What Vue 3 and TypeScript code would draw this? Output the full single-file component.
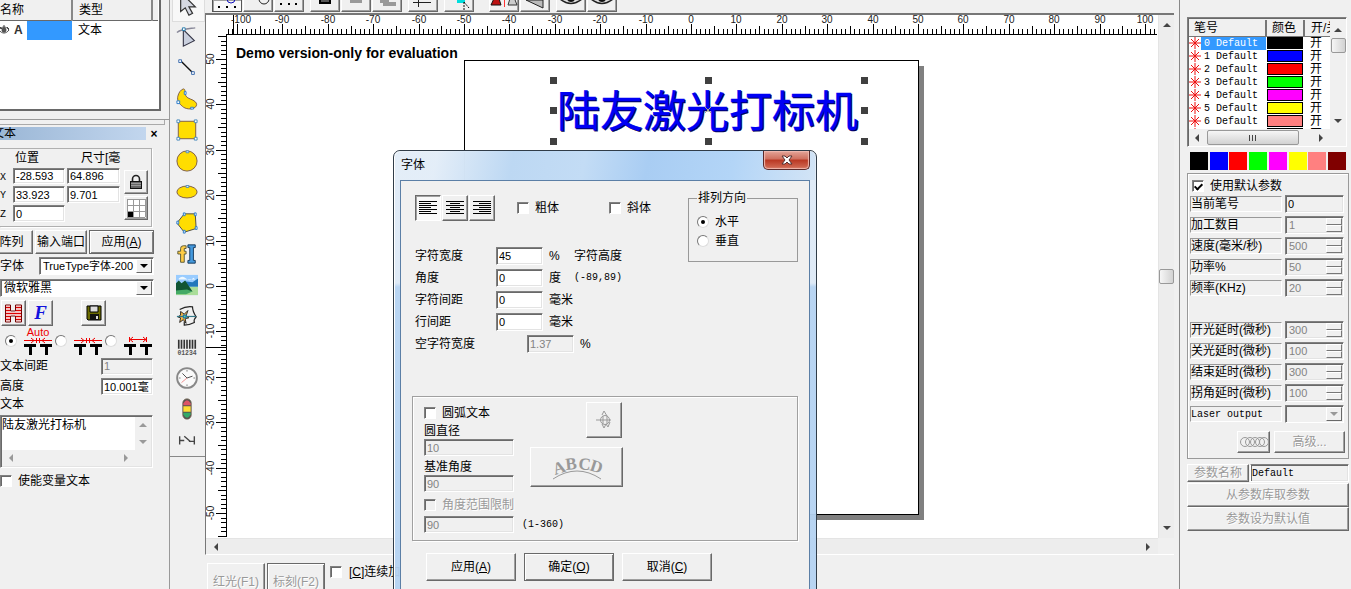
<script setup lang="ts">
import { ref } from 'vue'

interface Tick { pos: number; len: number; label: string }

const UNIT_START = -102
const UNIT_END = 102

function ticks(zero: number, from: number, to: number, dir: 1 | -1): Tick[] {
  const out: Tick[] = []
  for (let n = from; n <= to; n++) {
    out.push({
      pos: Math.round(zero + dir * n * 4.54),
      len: n % 10 === 0 ? 10 : n % 5 === 0 ? 8 : 5,
      label: n % 10 === 0 ? String(n) : '',
    })
  }
  return out
}

const hTicks = ticks(485, UNIT_START, UNIT_END, 1)
const vTicks = ticks(271, -55, 55, -1)

const handles = [80, 110, 141].flatMap((y) =>
  [554, 709, 865].filter((x) => !(x === 709 && y === 110)).map((x) => ({ x: x - 206, y: y - 15 })),
)

const pens = [
  { id: 0, color: '#000000' },
  { id: 1, color: '#0000ff' },
  { id: 2, color: '#ff0000' },
  { id: 3, color: '#00ff00' },
  { id: 4, color: '#ff00ff' },
  { id: 5, color: '#ffff00' },
  { id: 6, color: '#ff8080' },
  { id: 7, color: '#800000' },
]
const selectedPen = ref(0)

const params = [
  { id: 'count', label: '加工数目', value: '1' },
  { id: 'speed', label: '速度(毫米/秒)', value: '500' },
  { id: 'power', label: '功率%', value: '50' },
  { id: 'freq', label: '频率(KHz)', value: '20' },
]
const delays = [
  { id: 'on', label: '开光延时(微秒)', value: '300' },
  { id: 'off', label: '关光延时(微秒)', value: '100' },
  { id: 'end', label: '结束延时(微秒)', value: '300' },
  { id: 'corner', label: '拐角延时(微秒)', value: '100' },
]

const useDefault = ref(true)
const bold = ref(false)
const italic = ref(false)
const arc = ref(false)
const variable = ref(false)
const continuous = ref(false)
const direction = ref('h')
const spacing = ref('auto')
const align = ref('left')
const content = ref('陆友激光打标机')
</script>

<template>
  <div class="app">
    <aside class="left">
      <div class="objects">
        <table>
          <thead><tr><th class="c1">名称</th><th class="c2">类型</th><th></th></tr></thead>
          <tbody>
            <tr>
              <td class="c1">
                <div class="objname">
                  <svg width="11" height="10" viewBox="0 0 11 10" fill="none" stroke="#444"><path d="M-1 5C2 1 6 1 9 5C6 9 2 9 -1 5M0 2l2 2M4 0v3M7 2l2 2" /><circle cx="4" cy="5" r="2" fill="#555" /></svg>
                  <b>A</b><span class="sel"></span>
                </div>
              </td>
              <td class="c2">文本</td><td></td>
            </tr>
          </tbody>
        </table>
      </div>
      <div class="dock"><div></div></div>
      <div class="caption"><div class="capbar"><span>文本</span></div><button aria-label="关闭面板">×</button></div>

      <div class="posgroup">
        <div class="posgrid">
          <span></span><span class="hd">位置</span><span class="hd size">尺寸[毫</span>
          <label for="px">X</label><input id="px" class="sunk" value="-28.593"><input class="sunk" aria-label="宽度" value="64.896">
          <label for="py">Y</label><input id="py" class="sunk" value="33.923"><input class="sunk" aria-label="高" value="9.701">
          <label for="pz">Z</label><input id="pz" class="sunk" value="0">
        </div>
        <div class="posbtns">
          <button class="btn" aria-label="锁定"><svg width="14" height="16" viewBox="0 0 14 16"><path d="M3.500 8V5a3.500 3.500 0 0 1 7 0v3" fill="none" stroke="#222" stroke-width="1.600" /><rect x="1.500" y="7.500" width="11" height="7" fill="#666" stroke="#111" /><path d="M2 9.500h10M2 11.500h10" stroke="#999" /></svg></button>
          <button class="btn" aria-label="基准点"><svg width="20" height="20" viewBox="0 0 20 20"><rect x="1" y="1" width="18" height="18" fill="#fff" /><path d="M1.500 1v18M7.500 1v18M13.500 1v18M19.500 1v18M1 1.500h18M1 7.500h18M1 13.500h18M1 19.500h18" stroke="#999" /><rect x="2" y="14" width="5" height="5" /></svg></button>
        </div>
      </div>

      <div class="btnrow"><button class="btn b1">阵列</button><button class="btn b2">输入端口</button><button class="btn def b3">应用(<u>A</u>)</button></div>
      <div class="line fontrow">
        <label for="ftype">字体</label>
        <span class="combo"><select id="ftype"><option>TrueType字体-200</option></select><i></i></span>
      </div>
      <span class="combo wide"><select aria-label="字体名称"><option>微软雅黑</option></select><i></i></span>
      <div class="iconrow">
        <button class="btn" aria-label="填充"><svg width="17" height="19" viewBox="0 0 17 19"><path d="M.5 1h5v6h5V1h6v17h-6v-6h-5v6h-5z" fill="#fff" stroke="#700" /><path d="M1 3.500h4M1 6.500h4M1 9.500h15M1 12.500h4M1 15.500h4M11 3.500h5M11 6.500h5M11 12.500h5M11 15.500h5" stroke="#d00" stroke-width="1.700" /></svg></button>
        <button class="btn ff" aria-label="字体属性">F</button>
        <button class="btn save" aria-label="保存"><svg width="16" height="16" viewBox="0 0 16 16"><path d="M1 1h14v14H2L1 14z" fill="#6b6b00" stroke="#000" /><path d="M4 1h8v6H4z" fill="#ddd" stroke="#000" /><path d="M4 9h9v6H4z" fill="#111" /><path d="M10 11h2v3h-2z" fill="#ddd" /></svg></button>
      </div>
      <div class="spacerow">
        <input v-model="spacing" type="radio" name="spacing" value="auto" aria-label="自动间距">
        <svg width="30" height="30" viewBox="0 0 30 30"><text x="15" y="10" text-anchor="middle" class="auto">Auto</text><path d="M1 14.500h28M8 12l3 2.500L8 17M22 12l-3 2.500L22 17M13.500 12v5M16.500 12v5" stroke="#e00" fill="none" /><path d="M1 18h12v3H9v8H6v-8H1zM17 18h12v3h-4v8h-3v-8h-5z" /></svg>
        <input v-model="spacing" type="radio" name="spacing" value="mid" aria-label="中心间距">
        <svg width="30" height="30" viewBox="0 0 30 30"><path d="M1 14.500h28M8 12l3 2.500L8 17M22 12l-3 2.500L22 17M13.500 12v5M16.500 12v5" stroke="#e00" fill="none" /><path d="M1 18h12v3H9v8H6v-8H1zM17 18h12v3h-4v8h-3v-8h-5z" /></svg>
        <input v-model="spacing" type="radio" name="spacing" value="edge" aria-label="边缘间距">
        <svg width="30" height="30" viewBox="0 0 30 30"><path d="M7 13.500h17M6.500 11v5M23.500 11v5M10 11l-3 2.500 3 2.500M20 11l3 2.500-3 2.500" stroke="#e00" fill="none" /><path d="M1 18h12v3H9v8H6v-8H1zM17 18h12v3h-4v8h-3v-8h-5z" /></svg>
      </div>
      <div class="line kv"><label for="tgap">文本间距</label><input id="tgap" class="sunk" value="1" disabled></div>
      <div class="line kv"><label for="thei">高度</label><input id="thei" class="sunk" value="10.001毫"></div>
      <label class="line" for="tbody">文本</label>
      <div class="area sunk">
        <textarea id="tbody" v-model="content"></textarea>
        <div class="vbar"><i class="ar up"></i><i class="ar down"></i></div>
        <div class="hbar"><i class="ar lf"></i><i class="ar rt"></i></div>
      </div>
      <label class="check varcheck"><input v-model="variable" type="checkbox">使能变量文本</label>
    </aside>

    <nav class="tools" aria-label="绘图工具">
      <button class="on" aria-label="选择"><svg viewBox="0 0 24 24"><path d="M4 0v18l5-4 4 8 4-2-4-7h7L6-1z" fill="#d5d8e2" stroke="#333" stroke-width="1.300" /></svg></button>
      <button aria-label="节点"><svg viewBox="0 0 24 24"><path d="M1 7c5-4 12-4 20-5" fill="none" stroke="#889" stroke-width="1.500" /><path d="M8 4v18l12-6z" fill="#c9cfdd" stroke="#334" stroke-width="1.200" /><path d="M7 2h3v3H7z" fill="#fff" stroke="#27a" /></svg></button>
      <button aria-label="直线"><svg viewBox="0 0 24 24"><path d="M5 4l13 13" stroke="#111" stroke-width="1.500" /><path d="M3 3h3v3H3zM17 16h3v3h-3z" fill="#fff" stroke="#36a" /></svg></button>
      <button aria-label="曲线"><svg viewBox="0 0 24 24"><path d="M8 1c3 0 1 5 3 8 2 3 7 3 10 6 2 2 2 4 0 6-4 3-11 2-14-1C3 17 1 13 2 9c1-4 3-7 6-8z" fill="#fd0" stroke="#754" /><path d="M9 4h2v3H9zM1 14h3v3H1zM16 21h3v2h-3z" fill="#fff" stroke="#27c" /></svg></button>
      <button aria-label="矩形"><svg viewBox="0 0 24 24"><path d="M2.500 2.500h19v19h-19z" fill="#fd0" stroke="#754" /><path d="M1 1h3v3H1zM20 1h3v3h-3zM1 20h3v3H1zM20 20h3v3h-3z" fill="#fff" stroke="#48b" /></svg></button>
      <button aria-label="圆"><svg viewBox="0 0 24 24"><circle cx="12" cy="12" r="11" fill="#fd0" stroke="#754" /><path d="M11 1h3v2h-3z" fill="#fff" stroke="#48b" /></svg></button>
      <button aria-label="椭圆"><svg viewBox="0 0 24 24"><ellipse cx="12" cy="12" rx="11" ry="6.500" fill="#fd0" stroke="#754" /><path d="M11 5h3v2h-3z" fill="#fff" stroke="#48b" /></svg></button>
      <button aria-label="多边形"><svg viewBox="0 0 24 24"><path d="M9 2h12l1 16-13 4-8-10z" fill="#fd0" stroke="#444" /><path d="M8 1h2v3H8zM20 1h2v3h-2zM21 16h2v3h-2zM8 20h2v3H8zM1 10h2v3H1z" fill="#fff" stroke="#27c" /></svg></button>
      <button aria-label="文字"><svg viewBox="0 0 24 24"><path d="M10 3H8Q5 3 5 6v3H2v3h3v9h4v-9h2V9H9V6h2V3z" fill="#fc4" stroke="#553" /><path d="M13 2h8v3h-2v14h2v3h-8v-3h2V5h-2z" fill="#49d" stroke="#135" /></svg></button>
      <button aria-label="位图"><svg viewBox="0 0 24 24"><path d="M0 1h24v22H0z" fill="#9cf" /><path d="M9 8l9 1 6-4v9H9z" fill="#27b" /><path d="M3 5q4-4 8 0t8-1l2 2H3z" fill="#eef8ff" /><path d="M0 14h24v9H0z" fill="#ad9" /><path d="M0 10l3-3 3 3 4-3 4 6 4 6H0z" fill="#153" /><path d="M0 18l12-1 6 2-7 3H0z" fill="#4a6" /></svg></button>
      <button aria-label="矢量文件"><svg viewBox="0 0 24 24" fill="none" stroke="#222" stroke-width="1.300"><path d="M4 5q7-4 14-3 0 5 4 11-3 3-2 6-6 3-11 3v-4" /><path d="M5 7l4 3 4-4-2 6 3 2-4 1 1 5-3-4-4 3 1-5-3-1 3-2z" fill="#fb4" stroke-width="1" /><path d="M1 12.500h21" stroke="#378" /><path d="M8 11h3v3H8z" fill="#5d9" stroke="#27a" /></svg></button>
      <button aria-label="条码"><svg viewBox="0 0 24 24"><path d="M3 4v10M6 4v10M9 4v10M12 4v10M15 4v10M18 4v10M21 4v10" stroke="#333" stroke-width="1.800" /><text x="12" y="21" text-anchor="middle" class="code">01234</text></svg></button>
      <button aria-label="延时器"><svg viewBox="0 0 24 24"><circle cx="12" cy="12" r="10.800" fill="#fafafa" stroke="#888" stroke-width="2" /><path d="M7 7l5 5 6-2" fill="none" stroke="#444" /><path d="M12 12l-6 5" stroke="#e88" /><path d="M12 3v2M12 19v2M3 12h2M19 12h2" stroke="#777" /></svg></button>
      <button aria-label="输入输出"><svg viewBox="0 0 24 24"><rect x="7.500" y="1" width="9" height="22" rx="4.500" fill="#555" stroke="#654" /><path d="M8 8V6q4-7 8 0v2z" fill="#d56" /><path d="M8 9h8v6H8z" fill="#fd3" /><path d="M8 16h8v2q-4 7-8 0z" fill="#3a6" /></svg></button>
      <button aria-label="编码器"><svg viewBox="0 0 24 24" fill="none" stroke="#444" stroke-width="1.500"><path d="M4 8v9M20 8v9M4 12.500h5M9 8l7 6M14 13.500h6" /></svg></button>
    </nav>

    <main class="center">
      <div class="topbar">
        <div class="grp">
          <button class="btn pressed" aria-label="捕捉网格"><svg width="28" height="12"><path d="M5 6h2v2H5zM13 6h2v2h-2zM21 6h2v2h-2z" /><circle cx="18" cy="-1" r="4" fill="none" stroke="#11b" /></svg></button>
          <button class="btn" aria-label="捕捉圆心"><svg width="28" height="12"><circle cx="20" cy="-1" r="5" fill="none" stroke="#222" /></svg></button>
          <button class="btn" aria-label="网格"><svg width="28" height="12"><path d="M5 3h2v2H5zM13 3h2v2h-2zM20 3h2v2h-2z" /></svg></button>
        </div>
        <div class="grp">
          <button class="btn" aria-label="组合"><svg width="28" height="12"><path d="M9-4h10v7H9z" fill="#555" stroke="#000" stroke-width="2" /></svg></button>
          <button class="btn" aria-label="分离"><svg width="28" height="12"><path d="M8-1h12v4H8z" fill="#999" /></svg></button>
          <button class="btn" aria-label="群组"><svg width="28" height="12"><path d="M7-1h9v4H7zM10 2h13v4H10z" fill="#999" /></svg></button>
        </div>
        <div class="grp"><button class="btn" aria-label="居中"><svg width="28" height="12"><path d="M4 2.500h18M9.500-3v10" stroke="#222" /></svg></button></div>
        <div class="grp g4"><button class="btn" aria-label="阵列工具"><svg width="28" height="12"><path d="M12-3h8v6h-8z" fill="#0dd" /><path d="M19 2v10M19 2l5 6" stroke="#111" stroke-dasharray="2 1" /></svg></button></div>
        <div class="grp">
          <button class="btn" aria-label="水平镜像"><svg width="28" height="12"><path d="M7-8L1 5h10z" fill="#b11" stroke="#111" /><path d="M14.500-4v11" stroke="#f33" /><path d="M22-8l5 13h-9z" fill="#ccc" stroke="#333" /></svg></button>
          <button class="btn" aria-label="垂直镜像"><svg width="28" height="12"><path d="M5 0h17v8z" fill="#bbb" stroke="#222" /></svg></button>
        </div>
        <div class="grp">
          <button class="btn" aria-label="预览"><svg width="28" height="12"><path d="M3-1q11 9 22 0" fill="#ddd" stroke="#222" stroke-width="1.500" /><circle cx="14" cy="-2" r="4" fill="#111" /></svg></button>
          <button class="btn" aria-label="查看"><svg width="28" height="12"><path d="M3-1q11 9 22 0" fill="#ddd" stroke="#222" stroke-width="1.500" /><circle cx="14" cy="-2" r="4" fill="#111" /></svg></button>
        </div>
      </div>

      <section class="view">
        <div class="canvas">
          <svg class="sheet" width="100%" height="100%">
            <rect x="264" y="51" width="454" height="454" fill="#808080" />
            <rect x="258.500" y="45.500" width="454" height="454" fill="#fff" stroke="#000" />
            <text x="352" y="113" class="artshadow">陆友激光打标机</text>
            <text x="351" y="112" class="art">陆友激光打标机</text>
            <rect v-for="h in handles" :key="h.x + '-' + h.y" :x="h.x - 4" :y="h.y - 3" width="7" height="7" fill="#404040" />
            <path d="M499 92l6 6M505 92l-6 6" stroke="#aa8" />
            <text x="30" y="43" class="demo">Demo version-only for evaluation</text>
            <g class="hruler">
              <path d="M20 19.500H951" stroke="#000" />
              <path d="M27.500 0v20" stroke="#000" />
              <template v-for="t in hTicks" :key="t.pos">
                <path :d="`M${t.pos + .5} ${19 - t.len}v${t.len}`" stroke="#000" />
                <text v-if="t.label" :x="t.pos + (t.label === '-100' ? 4 : 0)" y="8">{{ t.label }}</text>
              </template>
            </g>
            <g class="vruler">
              <path d="M20.500 20V522M0 332.500h21" stroke="#000" />
              <template v-for="t in vTicks" :key="t.pos">
                <path :d="`M${20 - t.len} ${t.pos + .5}h${t.len}`" stroke="#000" />
                <text v-if="t.label" :transform="`translate(8 ${t.pos}) rotate(-90)`">{{ t.label }}</text>
              </template>
            </g>
          </svg>
        </div>
        <div class="vscroll"><i class="ar up"></i><span class="thumb"></span><i class="ar down"></i></div>
        <div class="hscroll"><i class="ar lf"></i><i class="ar rt"></i></div>
        <div class="corner"></div>
      </section>

      <footer class="bottom">
        <button class="btn dis" disabled>红光(F1)</button>
        <button class="btn def dis" disabled>标刻(F2)</button>
        <label class="check"><input v-model="continuous" type="checkbox"><span>[<u>C</u>]连续加工</span></label>
      </footer>
    </main>

    <aside class="right">
      <div class="pens">
        <div class="penview">
          <table>
            <thead><tr><th class="p1">笔号</th><th class="p2">颜色</th><th class="p3">开/关</th></tr></thead>
            <tbody>
              <tr v-for="p in pens" :key="p.id" @click="selectedPen = p.id">
                <td class="p1">
                  <div class="pen">
                    <svg width="12" height="12" viewBox="0 0 12 12"><path d="M6 0v12M0 6h12M2 2l8 8M10 2l-8 8" stroke="#e11" /></svg>
                    <span :class="{ picked: selectedPen === p.id }">{{ p.id }} Default</span>
                  </div>
                </td>
                <td class="p2"><svg class="swatch" width="36" height="12"><rect x=".5" y=".5" width="35" height="11" :fill="p.color" stroke="#000" /></svg></td>
                <td class="p3">开</td>
              </tr>
            </tbody>
          </table>
        </div>
        <div class="penv"><i class="ar up"></i><span class="thumb"></span><i class="ar down"></i></div>
        <div class="penh"><i class="ar lf"></i><span class="thumb"><svg width="8" height="6"><path d="M.5 0v6M3.500 0v6M6.500 0v6" stroke="#444" /></svg></span><i class="ar rt"></i></div>
      </div>
      <div class="palette"><svg v-for="p in pens" :key="p.id" height="18" width="18"><rect width="18" height="18" :fill="p.color" /></svg></div>
      <div class="params">
        <label class="check"><input v-model="useDefault" type="checkbox">使用默认参数</label>
        <div class="prow"><label for="cur">当前笔号</label><input id="cur" class="sunk flat" value="0" readonly></div>
        <div v-for="f in params" :key="f.id" class="prow">
          <label :for="f.id">{{ f.label }}</label>
          <span class="spin sunk"><input :id="f.id" :value="f.value" disabled><i><b></b><b></b></i></span>
        </div>
        <div class="prow gap"></div>
        <div v-for="f in delays" :key="f.id" class="prow">
          <label :for="f.id">{{ f.label }}</label>
          <span class="spin sunk"><input :id="f.id" :value="f.value" disabled><i><b></b><b></b></i></span>
        </div>
        <div class="prow mono"><label for="lo">Laser output</label><span class="combo off"><select id="lo" disabled><option></option></select><i></i></span></div>
        <div class="advrow">
          <button class="btn" disabled aria-label="摆动"><svg width="30" height="12" fill="none" stroke="#999"><circle cx="6" cy="6" r="4.500" /><circle cx="11" cy="6" r="4.500" /><circle cx="16" cy="6" r="4.500" /><circle cx="21" cy="6" r="4.500" /><circle cx="25" cy="6" r="4.500" /></svg></button>
          <button class="btn dis" disabled>高级...</button>
        </div>
      </div>
      <div class="namerow"><button class="btn dis" disabled>参数名称</button><input class="sunk mono" aria-label="参数名称" value="Default" readonly></div>
      <button class="btn dis full" disabled>从参数库取参数</button>
      <button class="btn dis full" disabled>参数设为默认值</button>
    </aside>

    <section class="dialog" role="dialog" aria-labelledby="dtitle">
      <header><h1 id="dtitle">字体</h1><button class="close" aria-label="关闭"><svg width="12" height="10" viewBox="0 0 12 10"><path d="M1 1h3l2 2 2-2h3L8 5l3 4H8L6 7 4 9H1l3-4z" fill="#fff" stroke="#533" /></svg></button></header>
      <div class="client">
        <div class="toprow">
          <div class="aligns">
            <button class="btn" :class="{ pressed: align === 'left' }" aria-label="左对齐" @click="align = 'left'"><svg width="20" height="16"><path d="M1 1.500h18M1 3.500h12M1 5.500h18M1 7.500h12M1 9.500h18M1 11.500h12M1 13.500h18" /></svg></button>
            <button class="btn" :class="{ pressed: align === 'center' }" aria-label="居中对齐" @click="align = 'center'"><svg width="20" height="16"><path d="M1 1.500h18M5 3.500h10M1 5.500h18M5 7.500h10M1 9.500h18M5 11.500h10M1 13.500h18" /></svg></button>
            <button class="btn" :class="{ pressed: align === 'right' }" aria-label="右对齐" @click="align = 'right'"><svg width="20" height="16"><path d="M1 1.500h18M7 3.500h12M1 5.500h18M7 7.500h12M1 9.500h18M7 11.500h12M1 13.500h18" /></svg></button>
          </div>
          <label class="check bold"><input v-model="bold" type="checkbox">粗体</label>
          <label class="check"><input v-model="italic" type="checkbox">斜体</label>
          <fieldset>
            <legend>排列方向</legend>
            <label class="check"><input v-model="direction" type="radio" name="dir" value="h">水平</label>
            <label class="check"><input v-model="direction" type="radio" name="dir" value="v">垂直</label>
          </fieldset>
        </div>
        <div class="fields">
          <div class="frow"><label for="cw">字符宽度</label><input id="cw" class="sunk" value="45"><span class="unit">%</span><span>字符高度</span></div>
          <div class="frow"><label for="ang">角度</label><input id="ang" class="sunk" value="0"><span class="unit">度</span><span class="num">(-89,89)</span></div>
          <div class="frow"><label for="cs">字符间距</label><input id="cs" class="sunk" value="0"><span class="unit">毫米</span></div>
          <div class="frow"><label for="ls">行间距</label><input id="ls" class="sunk" value="0"><span class="unit">毫米</span></div>
          <div class="frow blank"><label for="bw">空字符宽度</label><input id="bw" class="sunk" value="1.37" disabled><span class="unit">%</span></div>
        </div>
        <div class="arcbox">
          <div class="arcleft">
            <label class="check"><input v-model="arc" type="checkbox">圆弧文本</label>
            <label class="cap" for="dia">圆直径</label>
            <input id="dia" class="sunk" value="10" disabled>
            <label class="cap base" for="base">基准角度</label>
            <input id="base" class="sunk" value="90" disabled>
            <label class="check dis lim"><input type="checkbox" disabled>角度范围限制</label>
            <div class="limrow"><input class="sunk" aria-label="角度范围" value="90" disabled><span class="num">(1-360)</span></div>
          </div>
          <div class="arcright">
            <button class="btn a1" disabled aria-label="方向"><svg width="18" height="18" viewBox="0 0 18 18" fill="none" stroke="#999"><circle cx="10" cy="9" r="4.500" /><path d="M1 9h15M7 4l2-4 3 5M7 13l2 4 2-4 2 3 2-5M8 5v8M12 5v8" /></svg></button>
            <button class="btn a2" disabled aria-label="弧形文字">
              <svg width="54" height="26" viewBox="0 0 54 26"><path d="M3 25Q27 9 51 25" fill="none" stroke="#999" /><g class="abcd"><text transform="translate(5 21) rotate(-18)">A</text><text transform="translate(16 16) rotate(-6)">B</text><text transform="translate(28 15) rotate(6)">C</text><text transform="translate(39 16) rotate(18)">D</text></g></svg>
            </button>
          </div>
        </div>
        <div class="actions"><button class="btn">应用(<u>A</u>)</button><button class="btn def">确定(<u>O</u>)</button><button class="btn">取消(<u>C</u>)</button></div>
      </div>
    </section>
  </div>
</template>

<style>
html, body { margin: 0; background: #f0f0f0; overflow: hidden; }
</style>

<style scoped>
* { box-sizing: border-box; }
.app { position: relative; display: flex; height: 100vh; overflow: hidden; background: #f0f0f0; color: #000; font: 12px/16px "Liberation Sans", "Noto Sans CJK SC", sans-serif; white-space: nowrap; }
button, input, select, textarea { font: inherit; color: inherit; margin: 0; padding: 0; border-radius: 0; }
button { white-space: nowrap; overflow: hidden; }
svg { display: block; flex: none; }
input { min-width: 0; }
table { border-collapse: collapse; table-layout: fixed; }
th, td { padding: 0; font-weight: normal; text-align: left; overflow: hidden; }
.btn { display: flex; align-items: center; justify-content: center; background: #f0f0f0; border: 1px solid; border-color: #fff #696969 #696969 #fff; box-shadow: inset -1px -1px #a0a0a0; }
.btn.def { border-color: #696969; box-shadow: inset 1px 1px #fff, inset -1px -1px #808080; }
.btn.pressed { border-color: #696969 #fff #fff #696969; box-shadow: inset 1px 1px #a0a0a0; background: #f8f8f8; }
.dis { color: #999; text-shadow: 1px 1px #fff; }
.sunk { background: #fff; border: 1px solid; border-color: #808080 #fff #fff #808080; box-shadow: inset 1px 1px #696969, inset -1px -1px #e3e3e3; padding: 0 2px; font-size: 11px; border-radius: 0; outline: none; }
.sunk:disabled { background: #f0f0f0; color: #838383; }
.sunk.flat { background: #f0f0f0; }
.check { display: flex; align-items: center; gap: 6px; height: 16px; }
input[type="checkbox"] { appearance: none; flex: none; width: 12px; height: 12px; background: #fff; border: 1px solid; border-color: #808080 #fff #fff #808080; box-shadow: inset 1px 1px #696969; display: grid; place-items: center; }
input[type="checkbox"]:disabled { background: #f0f0f0; }
input[type="checkbox"]:checked::after { content: ""; width: 3px; height: 6px; border: solid #000; border-width: 0 2px 2px 0; transform: rotate(45deg); }
input[type="radio"] { appearance: none; flex: none; width: 12px; height: 12px; border-radius: 50%; background: #fff; border: 1px solid; border-color: #777 #ddd #ddd #777; display: grid; place-items: center; }
input[type="radio"]:checked::after { content: ""; width: 4px; height: 4px; border-radius: 50%; background: #000; }
.ar { display: block; flex: none; width: 0; height: 0; border: 4px solid transparent; }
.ar.up { border-bottom-color: #444; border-top: 0; }
.ar.down { border-top-color: #444; border-bottom: 0; }
.ar.lf { border-right-color: #444; border-left: 0; }
.ar.rt { border-left-color: #444; border-right: 0; }
.thumb { display: block; border: 1px solid #999; border-radius: 2px; background: linear-gradient(90deg, #f6f6f6, #d2d2d2); }
.combo { display: flex; height: 18px; background: #fff; border: 1px solid; border-color: #808080 #fff #fff #808080; box-shadow: inset 1px 1px #696969; padding: 1px; overflow: hidden; }
.combo select { appearance: none; flex: 1; min-width: 0; border: 0; background: none; padding-left: 2px; outline: none; font-size: 12px; line-height: 14px; }
.combo i { flex: none; display: grid; place-items: center; width: 16px; background: #f0f0f0; border: 1px solid; border-color: #fff #696969 #696969 #fff; }
.combo i::after { content: ""; border: 4px solid transparent; border-top-color: #000; border-bottom: 0; }
.combo.off { background: #f0f0f0; }
.combo.off i::after { border-top-color: #999; }
.mono { font-family: "Liberation Mono", monospace; font-size: 10px; }

/* object list and text properties */
.left { flex: none; width: 170px; border-right: 1px solid #999; overflow: hidden; }
.objects { width: 161px; height: 111px; background: #fff; border: solid #696969; border-width: 0 2px 2px 0; }
.objects table { width: 158px; }
.objects th { height: 20px; background: #f0f0f0; border-bottom: 1px solid #696969; border-right: 2px solid #888; vertical-align: middle; }
.objects th:last-child { border-right: 0; }
.objects .c1 { width: 72px; }
.objects .c2 { width: 80px; padding-left: 6px; }
.objects td { height: 19px; }
.objname { display: flex; align-items: center; height: 19px; gap: 3px; }
.objname b { width: 10px; color: #333; }
.objname .sel { flex: 1; align-self: stretch; background: #3399ff; }
.dock { margin-top: 8px; height: 8px; border-top: 1px solid #999; }
.dock div { width: 165px; height: 5px; border: solid #aaa; border-width: 0 1px 1px 0; }
.caption { display: flex; align-items: center; height: 13px; }
.capbar { flex: none; width: 146px; height: 13px; background: linear-gradient(90deg, #9bb7d6, #c2d6ee); line-height: 13px; overflow: hidden; }
.capbar span { margin-left: -8px; }
.caption button { flex: none; width: 16px; border: 0; background: none; font-weight: bold; line-height: 12px; }
.posgroup { display: flex; gap: 4px; width: 152px; height: 79px; margin-top: 8px; border: 1px solid #b0b0b0; border-left: 0; box-shadow: 1px 1px #fff; overflow: hidden; }
.posgrid { display: grid; grid-template-columns: 11px 52px 53px; grid-template-rows: 17px 16px 17px 17px; column-gap: 2px; row-gap: 2px; width: 120px; }
.posgrid .hd { padding: 1px 0 0 2px; }
.posgrid .hd.size { padding-left: 14px; }
.posgrid label { font: 10px/20px "Liberation Mono", monospace; }
.posbtns { display: flex; flex-direction: column; gap: 2px; padding-top: 21px; }
.posbtns .btn { width: 24px; height: 24px; }
.btnrow { display: flex; gap: 2px; margin-top: 3px; margin-left: -10px; }
.btnrow .btn { flex: none; height: 24px; }
.b1 { width: 43px; }
.b2 { width: 52px; }
.b3 { width: 65px; }
.line { display: flex; align-items: center; }
.fontrow { height: 20px; margin-top: 2px; width: 154px; }
.fontrow .combo { margin-left: auto; width: 115px; }
.fontrow select { font-size: 11px; }
.wide { width: 154px; margin-top: 3px; }
.iconrow { display: flex; gap: 2px; padding-left: 1px; margin-top: 3px; }
.iconrow .btn { width: 25px; height: 26px; }
.ff { color: #1111dd; font: italic bold 19px "Liberation Serif", serif; }
.iconrow .save { margin-left: 26px; }
.spacerow { display: flex; align-items: center; gap: 4px; padding-left: 5px; height: 30px; width: 160px; }
.spacerow input { margin-right: 2px; }
.spacerow svg + input { margin-left: -2px; }
.auto { font: 11px "Liberation Sans", sans-serif; fill: #e00; }
.kv { width: 153px; height: 20px; justify-content: space-between; }
.kv .sunk { width: 52px; height: 17px; }
.area { display: grid; grid-template-columns: 1fr 16px; grid-template-rows: 1fr 16px; width: 153px; height: 53px; margin-top: 3px; padding: 1px; background: #f0f0f0; }
.area textarea { border: 0; resize: none; outline: none; background: #fff; font-size: 12px; overflow: hidden; line-height: 16px; width: 100%; height: 100%; }
.vbar { display: flex; flex-direction: column; justify-content: space-between; align-items: center; padding: 6px 0; }
.hbar { display: flex; justify-content: space-between; align-items: center; padding: 0 7px; }
.area .ar.up { border-bottom-color: #999; }
.area .ar.down { border-top-color: #999; }
.area .ar.lf { border-right-color: #999; }
.area .ar.rt { border-left-color: #999; }
.varcheck { margin-top: 5px; }

/* drawing tools */
.tools { flex: none; align-self: flex-start; display: flex; flex-direction: column; width: 35px; margin-top: -9px; border-bottom: 1px solid #888; }
.tools button { display: grid; place-items: center; height: 31px; border: 0; background: none; padding: 0 2px 2px 0; }
.tools button.on { background: #f8f8f8; border: 1px solid #ddd; margin-left: 2px; }
.tools svg { width: 22px; height: 22px; }
.code { font: bold 7px "Liberation Mono", monospace; fill: #555; }

/* drawing area */
.center { flex: 1; min-width: 0; display: flex; flex-direction: column; }
.topbar { flex: none; display: flex; align-items: flex-start; height: 13px; padding-left: 7px; gap: 6px; }
.grp { display: flex; gap: 1px; }
.grp .btn { width: 30px; height: 12px; border-top: 0; flex: none; }
.grp .btn.pressed { border-color: #555; }
.g4 { margin-right: 9px; }
.view { flex: 1; min-height: 0; display: grid; grid-template-columns: 1fr 16px; grid-template-rows: 1fr 16px; border: solid #777; border-width: 2px 0 0 1px; border-bottom: 1px solid #fff; margin-right: 5px; }
.canvas { background: #fff; overflow: hidden; min-width: 0; min-height: 0; }
.demo { font: bold 14px "Liberation Sans", sans-serif; }
.art, .artshadow { font: 43px "Noto Sans CJK SC", sans-serif; fill: #0000f4; stroke: #0000f4; stroke-width: .4; }
.artshadow { fill: #000050; stroke: #000050; }
.hruler text, .vruler text { font: 10px "Liberation Sans", sans-serif; text-anchor: middle; fill: #222; }
.vscroll, .hscroll { display: flex; align-items: center; justify-content: space-between; background: #ededed; }
.vscroll { flex-direction: column; padding: 8px 0; border-left: 1px solid #e4e4e4; }
.hscroll { padding: 0 8px; border-top: 1px solid #e4e4e4; }
.vscroll .thumb { width: 15px; height: 15px; }
.bottom { flex: none; display: flex; align-items: flex-start; gap: 2px; height: 34px; padding: 8px 0 0 2px; }
.bottom .btn { width: 58px; height: 37px; flex: none; }
.bottom .check { margin: 1px 0 0 3px; gap: 7px; }

/* pen list and parameters */
.right { flex: none; width: 172px; padding: 17px 2px 0 7px; border-left: 1px solid #888; }
.pens { width: 160px; height: 130px; display: grid; grid-template-columns: 1fr 16px; grid-template-rows: 1fr 17px; border: 1px solid; border-color: #808080 #fff #fff #808080; box-shadow: inset 1px 1px #696969; padding: 2px 0 0 1px; }
.penview { background: #fff; overflow: hidden; min-width: 0; min-height: 0; }
.penview table { width: 141px; }
.penview th { height: 16px; line-height: 14px; background: #f0f0f0; border-right: 2px solid #777; border-bottom: 1px solid #777; padding-left: 5px; }
.penview td { height: 13px; line-height: 12px; }
.penview .p1 { width: 77px; }
.penview .p2 { width: 38px; }
.penview .p3 { width: 26px; padding-left: 6px; border-right: 0; }
.pen { display: flex; height: 13px; align-items: center; }
.pen span { flex: 1; height: 13px; line-height: 13px; padding-left: 3px; font-family: "Liberation Mono", monospace; font-size: 10px; }
.pen .picked { background: #3399ff; color: #fff; }
.swatch { margin-left: 1px; }
.penv { display: flex; flex-direction: column; align-items: center; padding: 8px 0 6px; }
.penv .thumb { width: 15px; height: 15px; margin: 6px 0 auto; }
.penh { display: flex; align-items: center; gap: 8px; padding-left: 6px; }
.penh .thumb { display: grid; place-items: center; width: 92px; height: 15px; background: linear-gradient(#f6f6f6, #d2d2d2); }
.penh .rt { margin-left: 12px; }
.palette { display: flex; justify-content: space-between; width: 156px; margin: 5px 0 3px 3px; }
.params { width: 162px; height: 286px; border: 1px solid #999; box-shadow: inset 1px 1px #fff; padding: 4px 3px 0 2px; }
.params > .check { padding-left: 2px; height: 16px; }
.prow { display: flex; align-items: center; gap: 3px; height: 21px; }
.check + .prow { height: 20px; }
.prow label { width: 92px; height: 16px; line-height: 15px; border: 1px solid; border-color: #999 #fff #fff #999; overflow: hidden; }
.prow > .sunk, .prow .combo { width: 59px; height: 18px; }
.spin { display: flex; background: #f0f0f0; color: #838383; padding: 1px; }
.spin input { flex: 1; width: 20px; border: 0; background: none; padding-left: 2px; }
.spin i { display: flex; flex-direction: column; width: 16px; }
.spin b { flex: 1; border: 1px solid; border-color: #fff #777 #777 #fff; }
.advrow { display: flex; gap: 4px; justify-content: flex-end; margin-top: 7px; }
.advrow .btn { width: 33px; height: 22px; }
.advrow .btn + .btn { width: 71px; }
.namerow { display: flex; gap: 1px; margin-top: 5px; width: 162px; }
.namerow .btn { width: 62px; height: 18px; }
.namerow .sunk { width: 99px; height: 18px; background: #f0f0f0; font-size: 10px; padding: 0 1px; border-color: #808080 #fff #fff; }
.full { width: 162px; height: 24px; margin-top: 1px; }
.full + .full { margin-top: 0; }

/* font dialog, floats over the drawing */
.dialog { position: absolute; left: 393px; top: 150px; width: 424px; height: 460px; padding: 0 6px; border: 1px solid #303c48; border-radius: 7px 7px 0 0; background: linear-gradient(#dde9f6e6 0, #dde9f6f2 132px, #b5d3f2f2 136px); box-shadow: inset 1px 1px #fff; }
.dialog header { display: flex; justify-content: space-between; height: 29px; margin: 0 -5px; padding: 0 5px 0 6px; background: linear-gradient(100deg, #e4eef8cc 10%, #bdd8f3 28%, #c3dcf5 45%, #a9cdf3 60%, #b3d5f7 80%, #cfe2f5cc); border-radius: 6px 6px 0 0; }
.dialog h1 { margin: 5px 0 0; font: 12px/18px "Liberation Sans", "Noto Sans CJK SC", sans-serif; }
.close { display: grid; place-items: center; width: 47px; height: 19px; border: 1px solid #5c2a2a; border-top: 0; border-radius: 0 0 5px 5px; background: linear-gradient(#e3a598, #cf6f5e 45%, #b93722 50%, #d4705a); box-shadow: inset 0 0 1px 1px #f0b8ae; }
.client { height: 431px; background: #f0f0f0; border: 1px solid #5b7fa6; padding: 14px 11px 0 11px; }
.toprow { display: flex; height: 68px; padding-left: 3px; }
.aligns { display: flex; gap: 1px; }
.aligns .btn { width: 26px; height: 26px; }
.aligns path { stroke: #000; }
.toprow > .check { width: 42px; margin-top: 5px; }
.toprow .bold { margin: 5px 50px 0 22px; }
fieldset { width: 110px; height: 71px; margin: -4px 0 0 auto; padding: 7px 0 0 8px; border: 1px solid #999; min-width: 0; }
legend { padding: 0 1px; height: 14px; line-height: 14px; }
fieldset .check { height: 19px; }
.fields { width: 260px; margin-top: -18px; padding-left: 3px; }
.frow { display: flex; align-items: center; height: 22px; }
.frow label { width: 81px; }
.frow .sunk { width: 47px; height: 18px; margin-right: 6px; }
.frow .unit { width: 25px; }
.frow.blank label { width: 112px; }
.num { font-family: "Liberation Mono", monospace; font-size: 10px; }
.arcbox { display: flex; height: 145px; margin-top: 41px; border: 1px solid #a0a0a0; box-shadow: inset 1px 1px #fff, 1px 1px #fff; padding: 8px 0 0 11px; }
.arcleft { width: 106px; }
.arcleft .sunk { display: block; width: 90px; height: 17px; }
.arcleft .cap { display: block; height: 18px; line-height: 20px; }
.arcleft .base { height: 19px; line-height: 22px; }
.arcleft .lim { margin: 5px 0 3px; }
.limrow { display: flex; align-items: center; gap: 8px; }
.limrow .sunk { flex: none; }
.arcright { display: flex; flex-direction: column; gap: 9px; margin-top: -3px; }
.a1 { width: 36px; height: 36px; margin-left: 56px; }
.a2 { width: 93px; height: 40px; }
.abcd { font: bold 17px "Liberation Serif", serif; fill: #999; }
.actions { display: flex; gap: 8px; padding-left: 14px; margin-top: 12px; }
.actions .btn { width: 90px; height: 28px; }
</style>
